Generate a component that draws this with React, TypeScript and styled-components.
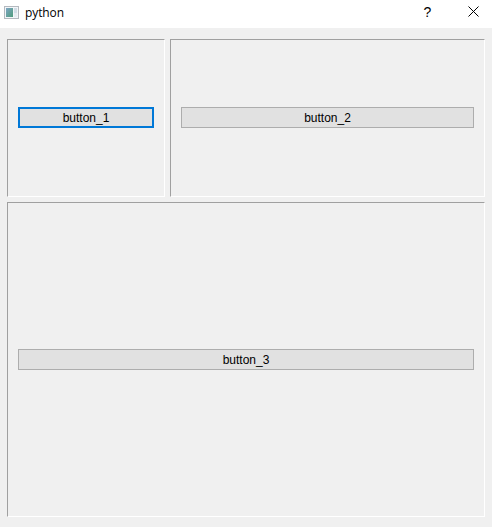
import React from "react";
import styled, { createGlobalStyle } from "styled-components";

const Global = createGlobalStyle`
  html, body { margin: 0; padding: 0; background: #f0f0f0; }
  * { box-sizing: border-box; }
`;

const Window = styled.div`
  width: 492px;
  height: 527px;
  display: flex;
  flex-direction: column;
  background: #f0f0f0;
  overflow: hidden;
`;

const TitleBar = styled.div`
  height: 28px;
  flex: none;
  display: flex;
  align-items: center;
  background: #ffffff;
  padding-left: 4px;
`;

const IconSvg = styled.svg`
  flex: none;
  margin-top: -2px;
`;

const TitleText = styled.span`
  margin-left: 5px;
  margin-top: -3px;
  font: 12px "Open Sans", "Noto Sans", sans-serif;
  letter-spacing: -0.1px;
  color: #000;
`;

const TitleButtons = styled.div`
  margin-left: auto;
  display: flex;
  height: 100%;
`;

const TitleButton = styled.div<{ $w: number }>`
  width: ${(p) => p.$w}px;
  display: flex;
  align-items: center;
  justify-content: center;
  padding-bottom: 5px;
`;

const Help = styled.span`
  margin-left: 1px;
  font: 14px "Liberation Sans", sans-serif;
  color: #000;
`;

const Grid = styled.div`
  flex: 1;
  display: grid;
  grid-template-columns: 158px 315px;
  grid-template-rows: 158px 315px;
  gap: 5px;
  padding: 11px 7px 10px 7px;
`;

const Frame = styled.div<{ $wide?: boolean }>`
  ${(p) => (p.$wide ? "grid-column: 1 / span 2;" : "")}
  display: flex;
  align-items: center;
  padding: ${(p) => (p.$wide ? "0 10px" : "0 10px 1px")};
  background: #f0f0f0;
  border-style: solid;
  border-width: 1px;
  border-color: #a0a0a0 #ffffff #ffffff #a0a0a0;
`;

const PushButton = styled.button<{ $focused?: boolean }>`
  width: 100%;
  height: 21px;
  padding: 0;
  background: #e1e1e1;
  border: ${(p) => (p.$focused ? "2px solid #0078d7" : "1px solid #adadad")};
  border-radius: 0;
  font: 12px "Liberation Sans", sans-serif;
  color: #000;
`;

const AppIcon = () => (
  <IconSvg width="16" height="14" viewBox="0 0 16 14">
    <defs>
      <linearGradient id="pane" x1="0" y1="0" x2="1" y2="1">
        <stop offset="0" stopColor="#7fa6c4" />
        <stop offset="1" stopColor="#4f9c7c" />
      </linearGradient>
    </defs>
    <rect x="0.5" y="0.5" width="14" height="12" fill="#f2f5f8" stroke="#b4b9bf" />
    <rect x="2" y="2" width="7" height="9" fill="url(#pane)" />
    <rect x="10" y="2" width="3" height="5" fill="#d2dde6" />
    <rect x="10" y="7" width="3" height="4" fill="#e6ecf1" />
  </IconSvg>
);

export default function App() {
  return (
    <Window>
      <Global />
      <TitleBar>
        <AppIcon />
        <TitleText>python</TitleText>
        <TitleButtons>
          <TitleButton $w={54}><Help>?</Help></TitleButton>
          <TitleButton $w={38}>
            <svg width="11" height="11" viewBox="0 0 11 11">
              <path d="M0.5 0.5L10.5 10.5M10.5 0.5L0.5 10.5" stroke="#000" fill="none" />
            </svg>
          </TitleButton>
        </TitleButtons>
      </TitleBar>
      <Grid>
        <Frame><PushButton $focused>button_1</PushButton></Frame>
        <Frame><PushButton>button_2</PushButton></Frame>
        <Frame $wide><PushButton>button_3</PushButton></Frame>
      </Grid>
    </Window>
  );
}
